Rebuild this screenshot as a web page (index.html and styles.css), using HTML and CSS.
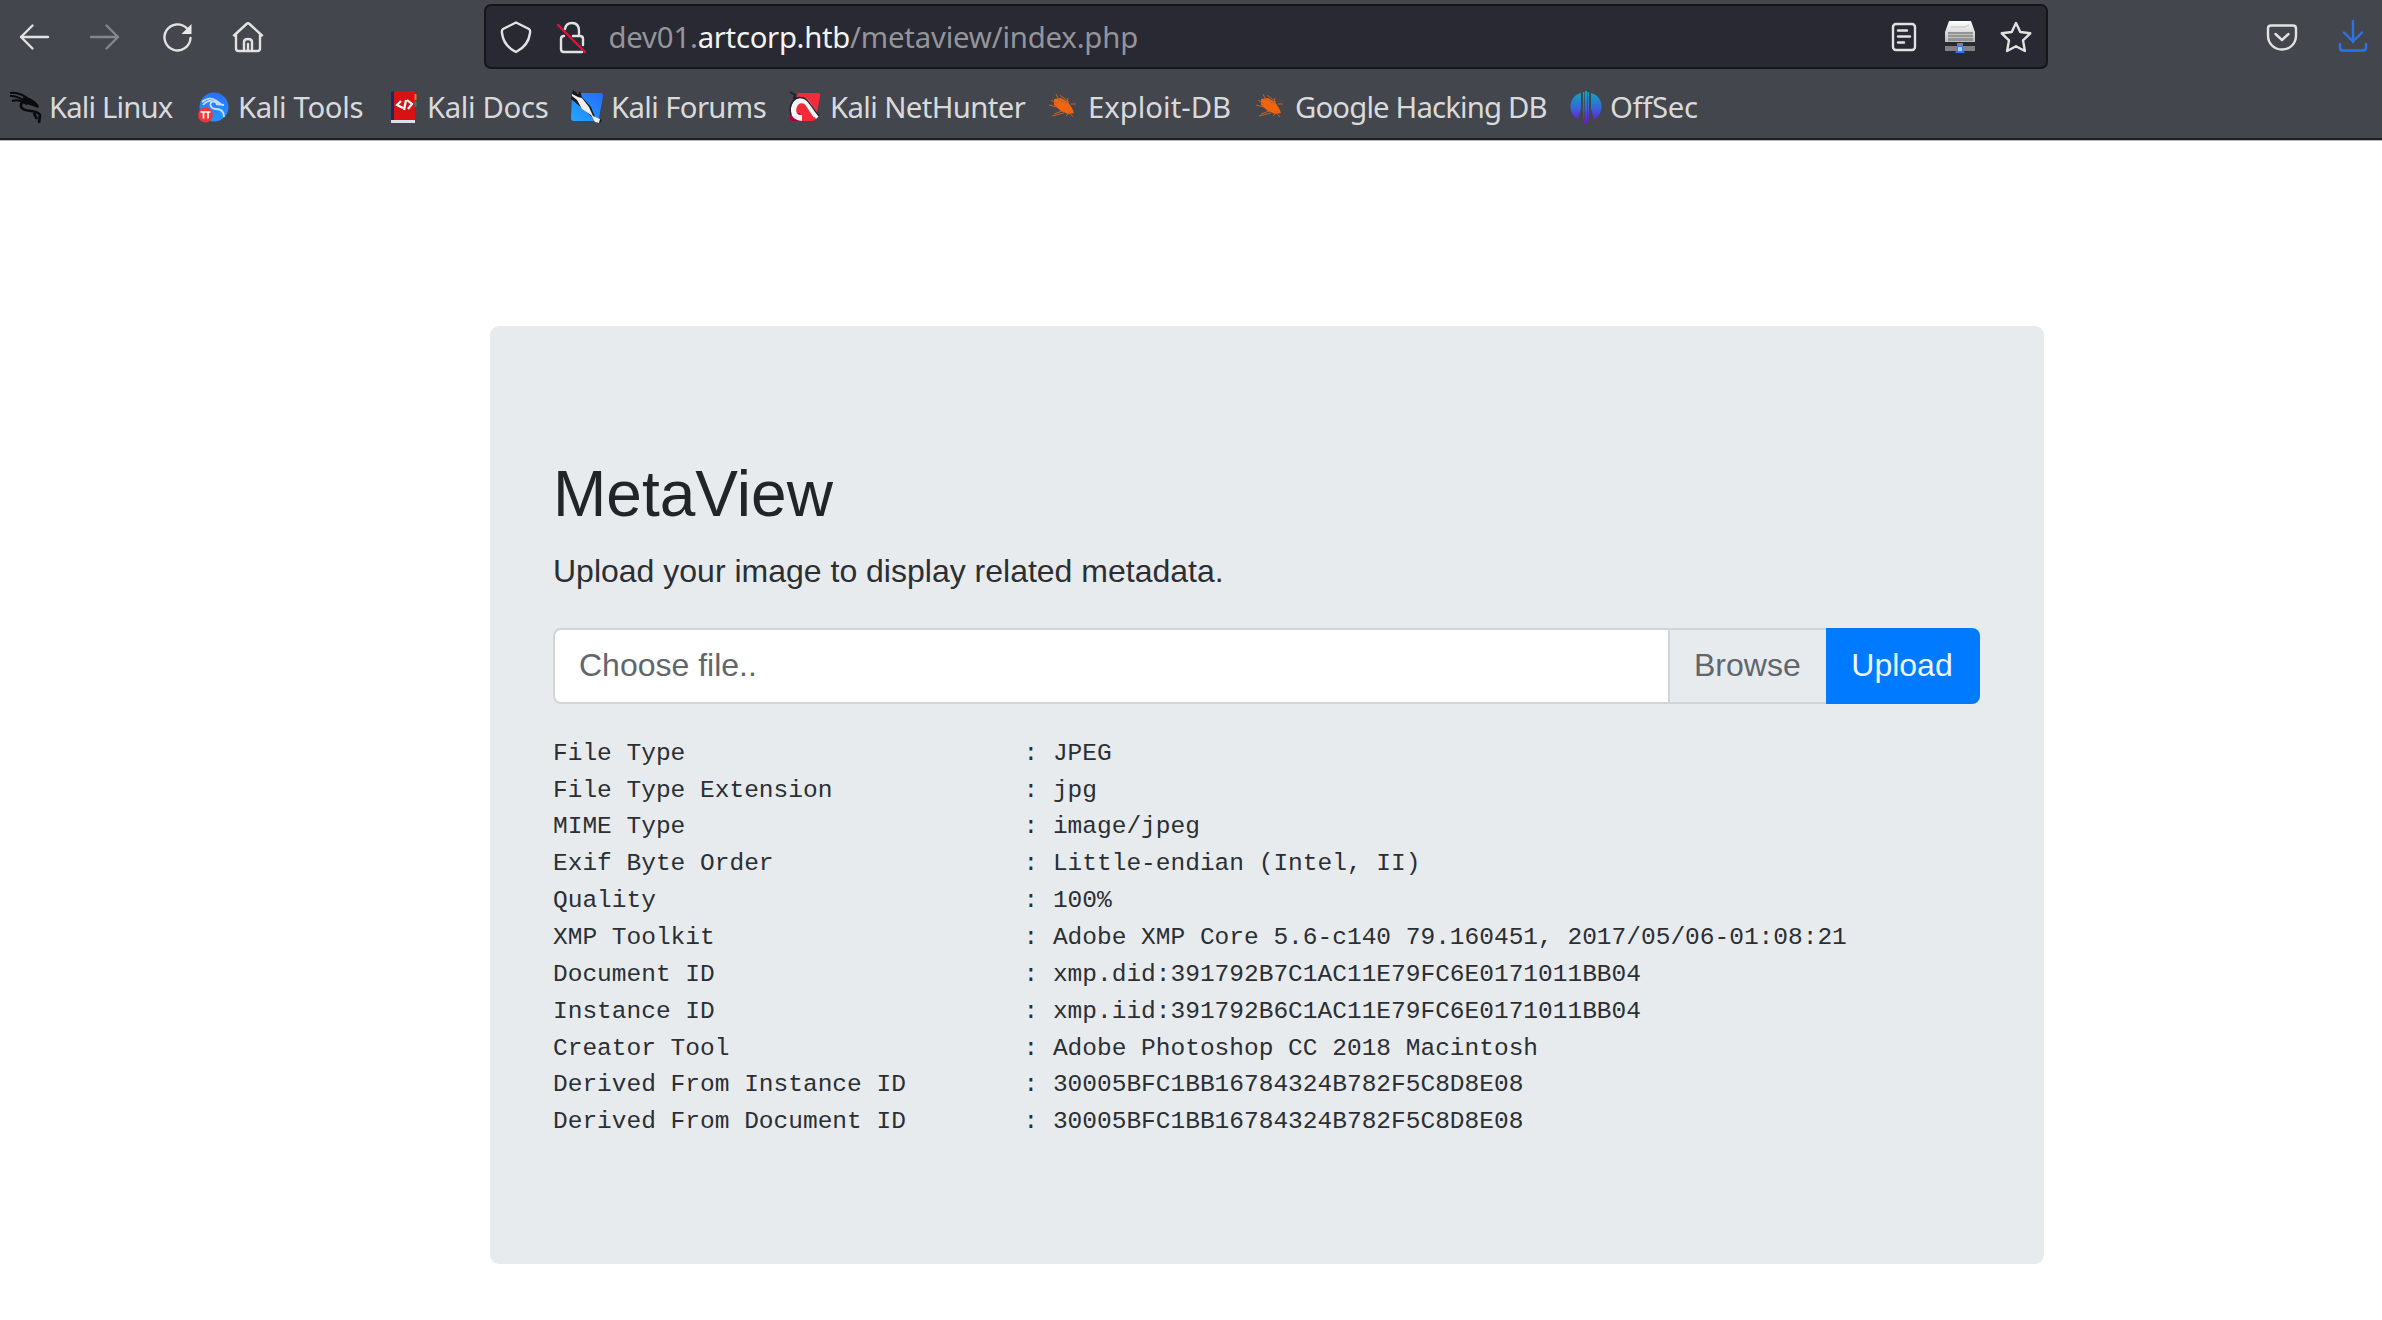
FILE: index.html
```html
<!DOCTYPE html>
<html lang="en">
<head>
<meta charset="utf-8">
<title>MetaView</title>
<link rel="stylesheet" href="styles.css">
</head>
<body>
<header class="chrome">
  <div class="toolbar">
    <nav class="nav-buttons">
      <svg class="icon" viewBox="0 0 32 32"><path d="M30 16H3M14.500 4.500L3 16l11.500 11.500"/></svg>
      <svg class="icon dim" viewBox="0 0 32 32"><path d="M2 16h27M17.500 4.500L29 16L17.500 27.500"/></svg>
      <svg class="icon" viewBox="0 0 32 32"><path d="M26 7.500A13 13 0 1 0 29.500 17"/><path class="solid" d="M30.500 3v10h-10z"/></svg>
      <svg class="icon" viewBox="0 0 32 32"><path d="M2 14.500L14.500 3q1.500-1.300 3 0L30 14.500M4 13v14.500q0 2.500 2.500 2.500h19q2.500 0 2.500-2.500V13M12 30V21q0-3 4-3t4 3v9M16 23v7"/></svg>
    </nav>
    <div class="urlbar">
      <svg class="icon shield" viewBox="0 0 32 32"><path d="M16 1.500L29 8q1.500 1 1 4C29 21 24 27 16 31C8 27 3 21 2 12q-.500-3 1-4z"/></svg>
      <svg class="icon lock" viewBox="0 0 32 32"><path d="M9 8q1-6 7-6q7 0 7 8v5M8 15q-3 0-3 3v10q0 3 3 3h18M17 15h7q3 0 3 3v6"/><path class="slash" d="M2 4l27 27"/></svg>
      <span class="url">dev01.<b>artcorp.htb</b>/metaview/index.php</span>
      <svg class="icon reader" viewBox="0 0 32 32"><rect x="5" y="3" width="22" height="26" rx="3"/><path d="M10 9.500h9M10 15.500h12M10 21.500h6"/></svg>
      <svg class="icon printer" viewBox="0 0 32 32">
        <defs><linearGradient id="disk" x2="0" y2="1"><stop offset="0" stop-color="#fff"/><stop offset="1" stop-color="#bbb"/></linearGradient></defs>
        <path fill="url(#disk)" stroke="none" d="M5 0h22l4 11v10H1V11z"/>
        <path fill="#939393" stroke="none" d="M4 11h25v9H4z"/><path stroke="#c1c1c1" stroke-width="1" d="M4 13.500h25M4 16.500h25M7 6h14l4-2"/>
        <path fill="#81827f" stroke="none" d="M13 22h6v3h12v5H1v-5h12z"/><path fill="#2f7cf0" stroke="none" d="M13 25h6v4l2 3H11l2-3z"/><path fill="#a4cfff" stroke="none" d="M14 26h4v4h-4z"/>
      </svg>
      <svg class="icon star" viewBox="0 0 32 32"><path d="M16 2l4.300 9 10 1.300-7.300 7 1.900 10.700L16 25.200 7.100 30 9 19.300l-7.300-7 10-1.300z"/></svg>
    </div>
    <div class="tools">
      <svg class="icon" viewBox="0 0 32 32"><path d="M5 4.500h22q3 0 3 3v7c0 8-6 14-14 14S2 22.500 2 14.500v-7q0-3 3-3z"/><path d="M9.500 13l6.500 6 6.500-6"/></svg>
      <svg class="icon download" viewBox="0 0 32 32"><path d="M16 0v21M7 11.500l9 9 9-9M3 23v3.500q0 3 3 3h20q3 0 3-3V23"/></svg>
    </div>
  </div>
  <nav class="bookmarks">
    <span class="bookmark tight"><svg viewBox="0 0 32 32"><path fill="none" stroke="#090a0c" stroke-width="2" d="M1 2c8-1 15 3 20 7M1 5c6-1 12 3 18 6M3 10c6-2 9 0 15 3"/><path fill="#090a0c" d="M14 6c6 0 12 3 16 9l-1 2-8-3-5-1z"/><path fill="none" stroke="#090a0c" stroke-width="2.600" d="M18 9c-6 1-8 6-4 9 5 3 15 1 17 6l-1 8M25 22c1 3 2 4 3 6"/></svg>Kali Linux</span>
    <span class="bookmark snug"><svg viewBox="0 0 32 32"><defs><linearGradient id="tools" x2="0" y2="1"><stop offset="0" stop-color="#2c6fff"/><stop offset="1" stop-color="#2196ff"/></linearGradient></defs><circle cx="16" cy="16" r="14.500" fill="url(#tools)"/><path fill="none" stroke="#c4e0ff" stroke-width="1.800" d="M4 11c6-5 11-5 20 3M5 14c5-6 10-5 15-1M15 10c-5 3-2 8 3 8s8 3 8 8M18 13l8 1"/><circle cx="7.500" cy="24" r="7.500" fill="#ec373b"/><path stroke="#fff" stroke-width="1.700" fill="none" d="M2.500 21h10M5.500 21v6.500M10 21v6.500"/></svg>Kali Tools</span>
    <span class="bookmark snug"><svg viewBox="0 0 32 32"><path fill="#1c2862" d="M4 2q0-2 4-2v28l-4 2z"/><path fill="#d81114" d="M7 0h21v29H7z"/><path stroke="#e9782c" stroke-width="2" d="M28.500 3v6"/><path stroke="#198b70" stroke-width="2" d="M28.500 10v6"/><path fill="#dce0e5" d="M4 29h24v3H4z"/><path fill="none" stroke="#fff" stroke-width="2.200" d="M14 10l-4 4 6 3M20 9l5 4-4 5M19 9l-2 10"/></svg>Kali Docs</span>
    <span class="bookmark"><svg viewBox="0 0 32 32"><defs><linearGradient id="forum" x1="1" x2="0" y2="1"><stop offset="0" stop-color="#246bff"/><stop offset="1" stop-color="#24a7ff"/></linearGradient></defs><path fill="url(#forum)" d="M3 2h27q2 0 2 3l-4 22q-1 3-4 3H3q-3 0-3-3l1-22z"/><path fill="#17191d" d="M2-1l5 4 2-3 2 6 9 10 4 10 7 3-2 3-3 0-6-7-9-8L0 8z"/><path fill="#eee" d="M1 3l6 3 4 1 7 9 4 9 7 3-1 4-4-1-4-7-9-6-5-9-5-4z"/></svg>Kali Forums</span>
    <span class="bookmark"><svg viewBox="0 0 32 32"><path fill="#f4293a" d="M8 2h20q3 0 2 3l-4 22q-1 3-5 3H3q-4 0-3-3z"/><path fill="#a90043" d="M0 22h10v8H2q-3 0-2-4z"/><path fill="none" stroke="#202126" stroke-width="2" d="M0 1l5 3-1 3 9 0 16 18"/><path fill="none" stroke="#f6f6f6" stroke-width="5.500" d="M12 27c-7 0-10-5-8-11 2-7 10-9 14-3l8 12"/><path fill="#f6f6f6" d="M20 14l9 11-3 3-7-9z"/><path fill="none" stroke="#25262b" stroke-width="1.500" d="M1 24c-3-10 3-20 12-17 6 1 8 9 16 18"/></svg>Kali NetHunter</span>
    <span class="bookmark wide"><svg viewBox="0 0 32 32"><path fill="#ef640f" d="M6 8l7-1 7 4 4 6 2 5-6 1-7-3-7-6z"/><path fill="none" stroke="#c66028" stroke-width="1" d="M8 3l3 6 8 3 1-5M3 9l6 4M1 14l8 2M6 23l8-3M4 25l12-3M18 25l5-5M23 13l5 0M12 4l9 7M21 21l4 5"/></svg>Exploit-DB</span>
    <span class="bookmark tight"><svg viewBox="0 0 32 32"><path fill="#ef640f" d="M6 8l7-1 7 4 4 6 2 5-6 1-7-3-7-6z"/><path fill="none" stroke="#c66028" stroke-width="1" d="M8 3l3 6 8 3 1-5M3 9l6 4M1 14l8 2M6 23l8-3M4 25l12-3M18 25l5-5M23 13l5 0M12 4l9 7M21 21l4 5"/></svg>Google Hacking DB</span>
    <span class="bookmark snug"><svg viewBox="0 0 32 32"><defs><linearGradient id="offsec" x1="0" y1="0" x2="0" y2="32" gradientUnits="userSpaceOnUse"><stop offset="0" stop-color="#08adc1"/><stop offset=".5" stop-color="#326bd5"/><stop offset="1" stop-color="#7210df"/></linearGradient></defs><path fill="url(#offsec)" d="M11 2v16L8 28C-3 23-2 5 11 2M21 2v16l3 10c11-5 10-23-3-26M13 1h1.300v22L13 31zM15 0h2v25l1 7h-4l1-7zM17.700 1H19v30l-1.300-8z"/></svg>OffSec</span>
  </nav>
</header>
<main class="card">
  <h1>MetaView</h1>
  <p>Upload your image to display related metadata.</p>
  <form class="file-group">
    <label class="file-name">Choose file..</label>
    <span class="browse">Browse</span>
    <button class="upload" type="button">Upload</button>
  </form>
<pre>File Type                       : JPEG
File Type Extension             : jpg
MIME Type                       : image/jpeg
Exif Byte Order                 : Little-endian (Intel, II)
Quality                         : 100%
XMP Toolkit                     : Adobe XMP Core 5.6-c140 79.160451, 2017/05/06-01:08:21
Document ID                     : xmp.did:391792B7C1AC11E79FC6E0171011BB04
Instance ID                     : xmp.iid:391792B6C1AC11E79FC6E0171011BB04
Creator Tool                    : Adobe Photoshop CC 2018 Macintosh
Derived From Instance ID        : 30005BFC1BB16784324B782F5C8D8E08
Derived From Document ID        : 30005BFC1BB16784324B782F5C8D8E08</pre>
</main>
</body>
</html>
```
FILE: styles.css
```css
* { box-sizing: border-box; }
body {
  margin: 0;
  height: 1320px;
  overflow: hidden;
  background: #fff;
  color: #2b2f33;
  font: 32px/1.5 "Liberation Sans", Arial, sans-serif;
}
.chrome {
  height: 140px;
  padding-top: 4px;
  background: #44464d;
  border-bottom: 2px solid #1d1e24;
  box-shadow: 0 1px #b9b9bb;
  font-family: "Noto Sans", sans-serif;
  color: #d9dadb;
}
.toolbar { display: flex; height: 65px; }
.nav-buttons {
  display: flex;
  align-items: center;
  gap: 39.500px;
  width: 484px;
  padding-left: 17.500px;
}
.icon {
  width: 32px;
  height: 32px;
  flex: none;
  overflow: visible;
  fill: none;
  stroke: #e2e2e2;
  stroke-width: 2.400;
  stroke-linecap: round;
  stroke-linejoin: round;
}
.icon.dim { stroke: #85868b; }
.icon .solid { fill: #e9e9e9; stroke: none; }
.icon .slash { stroke: #d4193f; }
.icon.download { stroke: #2b73e9; }
.urlbar {
  display: flex;
  align-items: center;
  width: 1564px;
  padding-left: 14px;
  background: #282933;
  border: 2px solid #15161a;
  border-radius: 7px;
}
.lock { margin-left: 24px; }
.url {
  flex: 1;
  margin-left: 20.500px;
  font-size: 29.300px;
  line-height: 40px;
  letter-spacing: -0.170px;
  white-space: nowrap;
  color: #94959a;
}
.url b { font-weight: 400; letter-spacing: -0.300px; color: #f4f4f4; }
.printer { margin-left: 24px; }
.star { margin: 0 14px 0 24px; }
.tools {
  display: flex;
  align-items: center;
  gap: 39px;
  margin-left: 218px;
}
.bookmarks {
  display: grid;
  grid-template-columns: 189px 189px 184px 219px 258px 207px 315px auto;
  align-items: center;
  height: 69px;
  padding: 7px 0 0 9px;
  font-size: 29.300px;
  line-height: 40px;
}
.bookmark {
  display: flex;
  align-items: center;
  gap: 8px;
  white-space: nowrap;
  letter-spacing: -0.620px;
}
.bookmark.tight { letter-spacing: -0.850px; }
.bookmark.snug { letter-spacing: -0.350px; }
.bookmark.wide { letter-spacing: 0; }
.bookmark svg { width: 32px; height: 32px; flex: none; overflow: visible; }
.card {
  width: 1554px;
  height: 938px;
  margin: 186px 0 0 490px;
  padding: 130px 64px 0 63px;
  background: #e8ebee;
  border-radius: 9px;
}
h1 { margin: 0 0 14px; font-size: 64px; font-weight: 400; line-height: 1.2; color: #212529; }
p { margin: 0 0 33px; }
.file-group { display: flex; height: 76px; margin: 0 0 32px; }
.file-name, .browse {
  display: flex;
  align-items: center;
  padding: 0 0 2px 24px;
  border: 2px solid #d0d5da;
  color: #60666c;
}
.file-name {
  flex: 1;
  background: #fff;
  border-right: 0;
  border-radius: 8px 0 0 8px;
}
.browse { width: 158px; border-right: 0; }
.upload {
  width: 154px;
  padding: 0 2px 2px 0;
  border: 0;
  border-radius: 0 8px 8px 0;
  background: #007bff;
  color: #eef6ff;
  font: inherit;
}
pre {
  margin: 0;
  font: 24.500px/36.850px "Liberation Mono", "Courier New", monospace;
}
```
